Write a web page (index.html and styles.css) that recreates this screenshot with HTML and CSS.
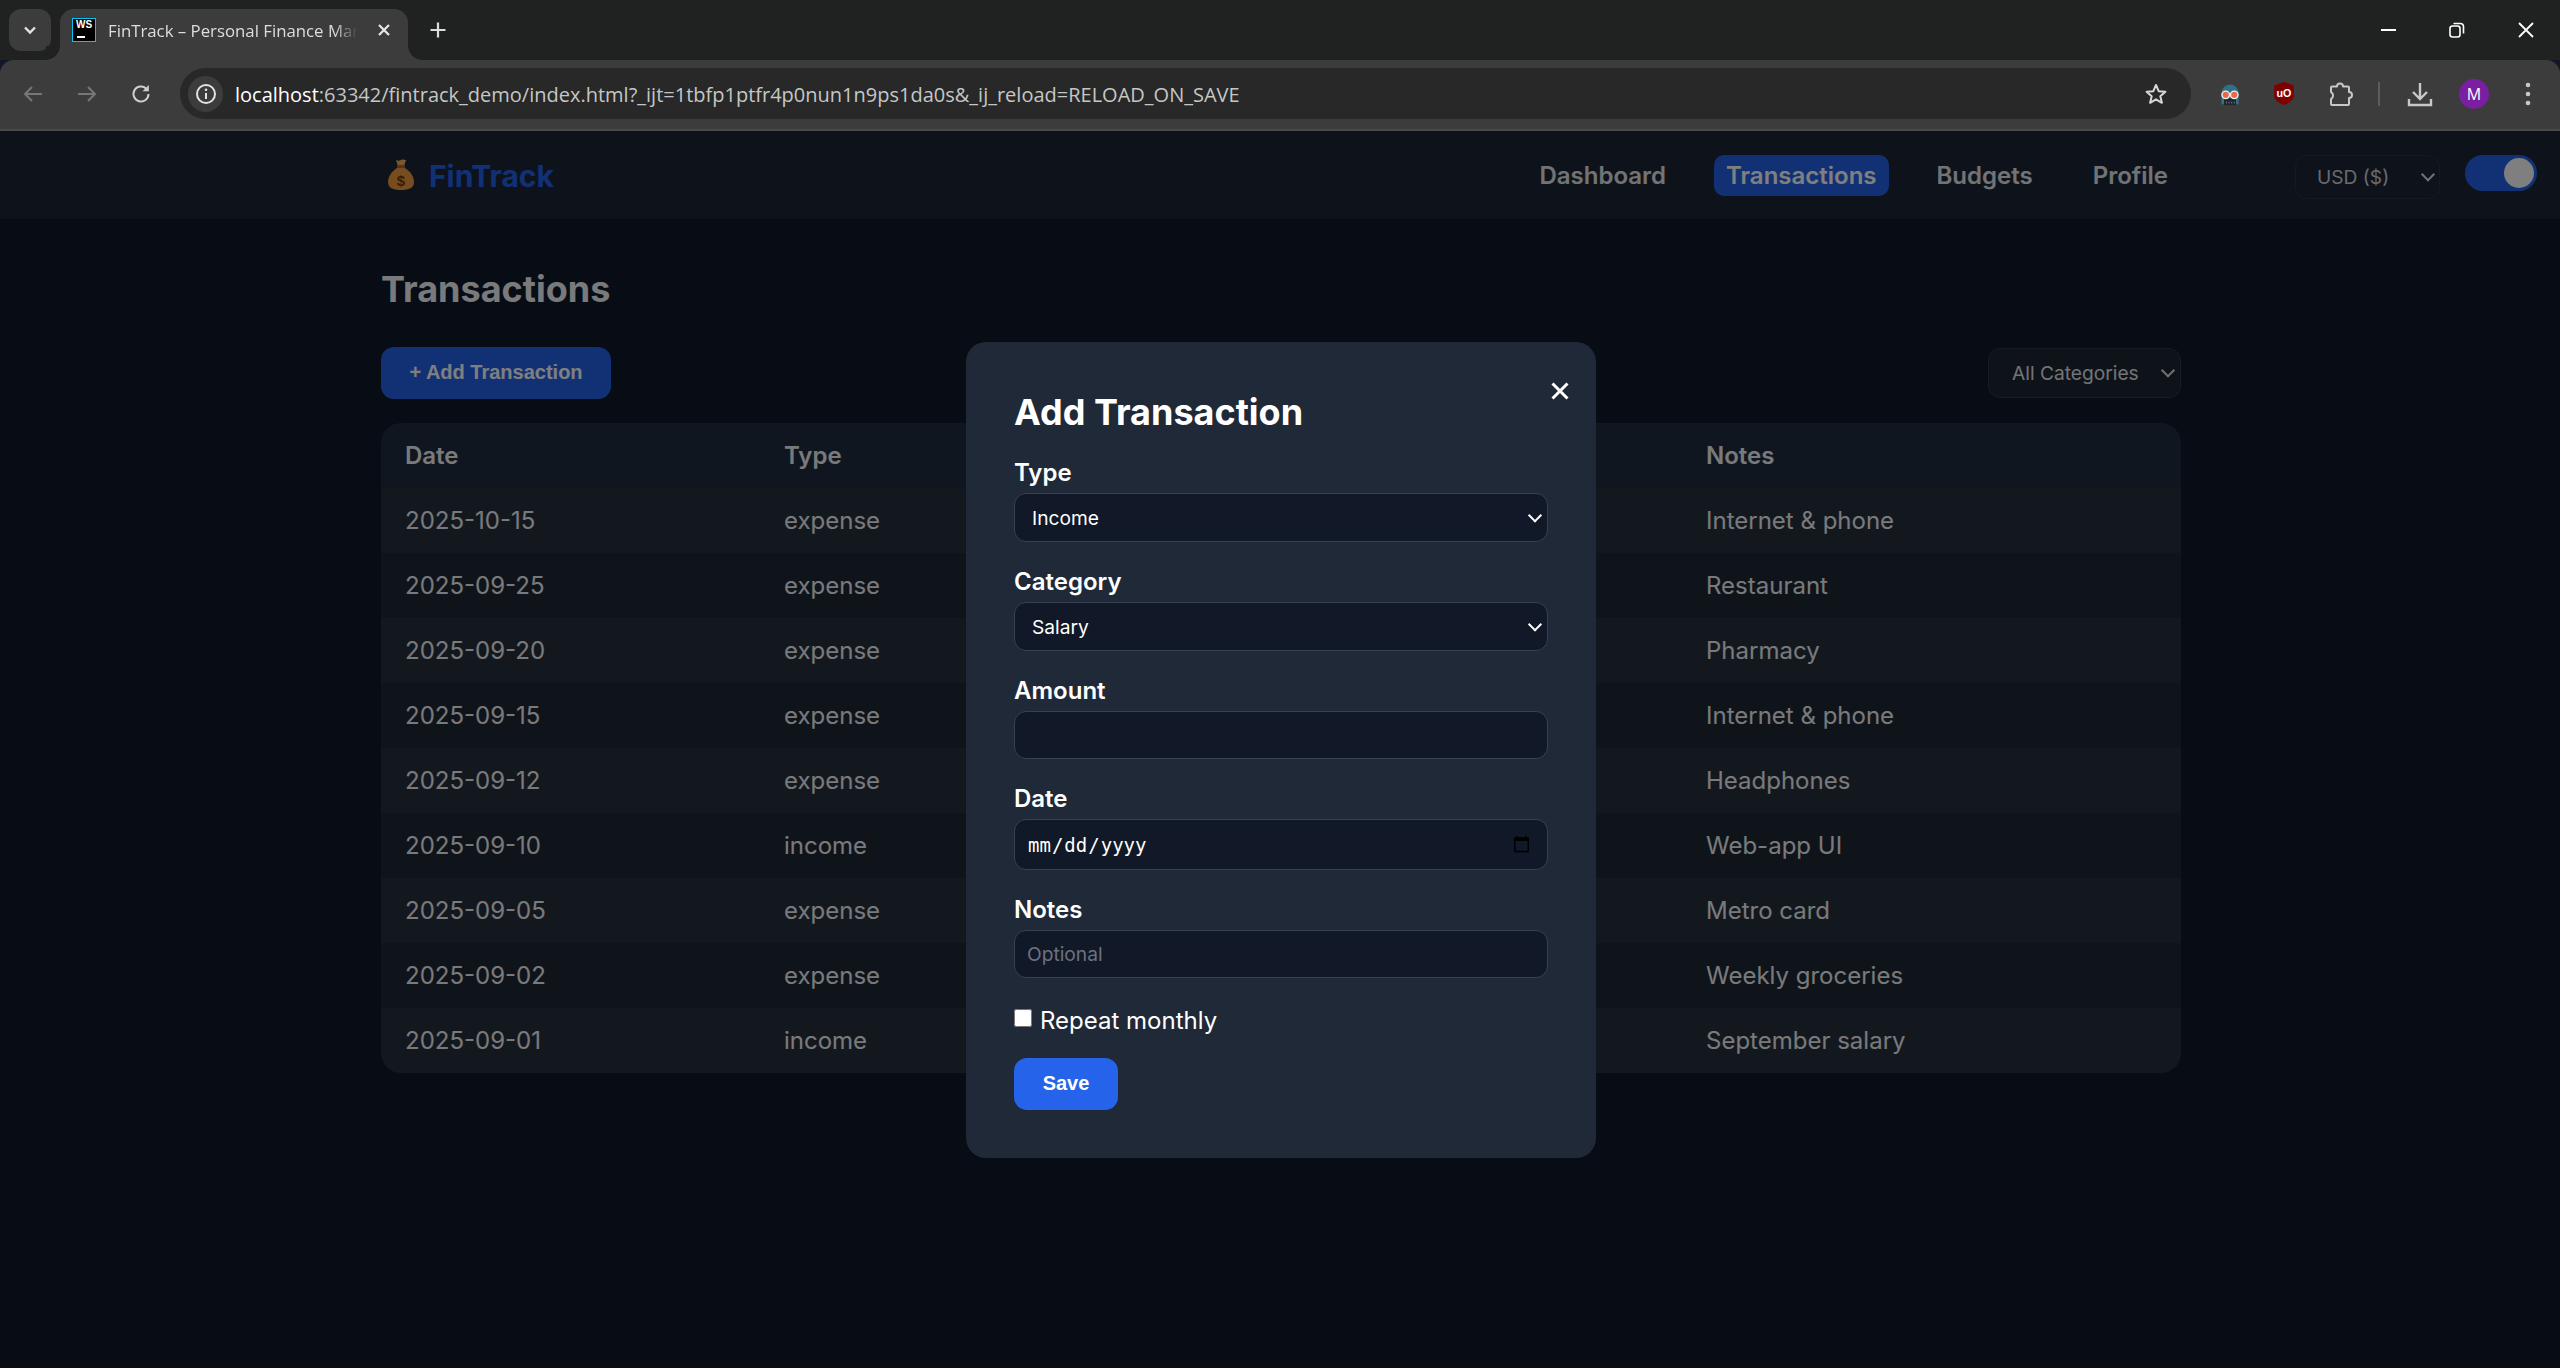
FILE: index.html
```html
<!DOCTYPE html>
<html lang="en">
<head>
    <meta charset="UTF-8">
    <title>FinTrack – Personal Finance Manager</title>
    <link rel="stylesheet" href="styles.css">
</head>
<body>

<div class="tabstrip">
    <div class="tab-list-btn">
        <svg width="18" height="18" viewBox="0 0 18 18"><path d="M4 6.5 9 11.5 14 6.5" fill="none" stroke="#e3e3e3" stroke-width="2.4"/></svg>
    </div>
    <div class="tab">
        <div class="favicon"><span class="favicon-text">WS</span><span class="favicon-bar"></span></div>
        <span class="tab-title">FinTrack – Personal Finance Mar</span>
        <svg class="tab-close" width="16" height="16" viewBox="0 0 16 16"><path d="M3 3 13 13M13 3 3 13" stroke="#e8e8e8" stroke-width="2.2"/></svg>
    </div>
    <svg class="new-tab" width="20" height="20" viewBox="0 0 20 20"><path d="M10 2.5v15M2.5 10h15" stroke="#dcdcdc" stroke-width="2.2"/></svg>
    <div class="window-controls">
        <svg width="18" height="18" viewBox="0 0 18 18"><path d="M2 9h15" stroke="#fff" stroke-width="2"/></svg>
        <svg width="18" height="18" viewBox="0 0 18 18"><rect x="2" y="5" width="10" height="11" rx="2.5" fill="none" stroke="#fff" stroke-width="1.6"/><path d="M5.5 2.5h7a3 3 0 0 1 3 3v7" fill="none" stroke="#fff" stroke-width="1.6"/></svg>
        <svg width="18" height="18" viewBox="0 0 18 18"><path d="M2 2 16 16M16 2 2 16" stroke="#fff" stroke-width="1.8"/></svg>
    </div>
</div>

<div class="toolbar">
    <svg class="nav-icon" width="24" height="24" viewBox="0 0 24 24"><path d="M21 12H4M11 5l-7 7 7 7" fill="none" stroke="#777" stroke-width="2"/></svg>
    <svg class="nav-icon" width="24" height="24" viewBox="0 0 24 24"><path d="M3 12h17M13 5l7 7-7 7" fill="none" stroke="#777" stroke-width="2"/></svg>
    <svg class="nav-icon" width="24" height="24" viewBox="0 0 24 24"><path d="M19.5 12a7.5 7.5 0 1 1-2.3-5.4" fill="none" stroke="#d0d0d0" stroke-width="2"/><path d="M19.8 3v6.2h-6.2z" fill="#d0d0d0"/></svg>
    <div class="omnibox">
        <div class="site-info">
            <svg width="24" height="24" viewBox="0 0 24 24"><circle cx="12" cy="12" r="9" fill="none" stroke="#e3e3e3" stroke-width="2"/><path d="M12 11v6" stroke="#e3e3e3" stroke-width="2"/><circle cx="12" cy="7.8" r="1.3" fill="#e3e3e3"/></svg>
        </div>
        <span class="url"><span class="url-host">localhost</span>:63342/fintrack_demo/index.html?_ijt=1tbfp1ptfr4p0nun1n9ps1da0s&amp;_ij_reload=RELOAD_ON_SAVE</span>
        <svg class="star" width="24" height="24" viewBox="0 0 24 24"><path d="M12 3l2.7 6.2 6.7.6-5.1 4.4 1.6 6.6L12 17.3l-5.9 3.5 1.6-6.6-5.1-4.4 6.7-.6z" fill="none" stroke="#d8d8d8" stroke-width="2" stroke-linejoin="round"/></svg>
    </div>
    <div class="extensions">
        <span class="ext-btn">
            <svg width="22" height="24" viewBox="0 0 24 28">
                <path d="M2 13a10 10 0 0 1 20 0v13H2z" fill="#2f7186"/>
                <rect x="5" y="19" width="14" height="8" fill="#20262b"/>
                <path d="M8 23v2M11 23v2M14 23v2M17 23v2" stroke="#6d8b96" stroke-width="1"/>
                <circle cx="7" cy="15" r="4.4" fill="#e7694a" stroke="#eee" stroke-width="1.6"/>
                <circle cx="17" cy="15" r="4.4" fill="#e7694a" stroke="#eee" stroke-width="1.6"/>
            </svg>
        </span>
        <span class="ext-btn">
            <svg width="22" height="25" viewBox="0 0 24 28">
                <path d="M12 1l11 4v11c0 5-5 9-11 11C6 25 1 21 1 16V5z" fill="#800000"/>
                <text class="ublock-text" x="12" y="18" text-anchor="middle">uO</text>
            </svg>
        </span>
        <span class="ext-btn ext-puzzle">
            <svg width="26" height="26" viewBox="0 0 26 26"><path d="M5 5.5h5a3 3 0 0 1 6 0h5a1 1 0 0 1 1 1V11a3 3 0 0 1 0 6v6a1 1 0 0 1-1 1H5a1 1 0 0 1-1-1v-5a4 4 0 0 0 0-7V6.5a1 1 0 0 1 1-1z" fill="none" stroke="#c8c8c8" stroke-width="2" stroke-linejoin="round"/></svg>
        </span>
        <span class="toolbar-sep"></span>
        <span class="ext-btn">
            <svg width="26" height="26" viewBox="0 0 26 26"><path d="M13 2v15M6 11l7 7 7-7" fill="none" stroke="#c8c8c8" stroke-width="2.4"/><path d="M2 18v6h22v-6" fill="none" stroke="#c8c8c8" stroke-width="2.4"/></svg>
        </span>
        <span class="ext-btn"><span class="avatar">M</span></span>
        <span class="ext-btn">
            <svg width="8" height="26" viewBox="0 0 8 26"><circle cx="4" cy="4" r="2.3" fill="#c8c8c8"/><circle cx="4" cy="13" r="2.3" fill="#c8c8c8"/><circle cx="4" cy="22" r="2.3" fill="#c8c8c8"/></svg>
        </span>
    </div>
</div>

<div class="app">
    <header class="site-header">
        <div class="logo">
            <svg width="28" height="32" viewBox="0 0 28 32">
                <path d="M9 1c2 1 3 1 5 0s3 0 5 0l-2 6h-6z" fill="#f0b060"/>
                <rect x="10" y="6" width="8" height="3" fill="#b06a22"/>
                <path d="M10 9C4 13 1 18 1 23c0 6 5 8 13 8s13-2 13-8c0-5-3-10-9-14z" fill="#ec9a3c"/>
                <text class="bag-text" x="14" y="27" text-anchor="middle">$</text>
            </svg>
            <span class="logo-text">FinTrack</span>
        </div>
        <nav class="nav">
            <a class="nav-link">Dashboard</a>
            <a class="nav-link active">Transactions</a>
            <a class="nav-link">Budgets</a>
            <a class="nav-link">Profile</a>
        </nav>
        <div class="select-wrap currency-wrap">
            <select class="currency">
                <option>USD ($)</option>
            </select>
        </div>
        <div class="toggle"><span class="knob"></span></div>
    </header>

    <main class="content">
        <h1 class="page-title">Transactions</h1>
        <div class="actions">
            <button class="btn btn-add">+ Add Transaction</button>
            <div class="select-wrap">
                <select class="filter">
                    <option>All Categories</option>
                </select>
            </div>
        </div>

        <table class="tx-table">
            <colgroup>
                <col class="col-date">
                <col class="col-type">
                <col class="col-cat">
                <col class="col-amount">
                <col class="col-notes">
            </colgroup>
            <thead>
                <tr><th>Date</th><th>Type</th><th></th><th></th><th>Notes</th></tr>
            </thead>
            <tbody>
                <tr><td>2025-10-15</td><td>expense</td><td></td><td></td><td>Internet &amp; phone</td></tr>
                <tr><td>2025-09-25</td><td>expense</td><td></td><td></td><td>Restaurant</td></tr>
                <tr><td>2025-09-20</td><td>expense</td><td></td><td></td><td>Pharmacy</td></tr>
                <tr><td>2025-09-15</td><td>expense</td><td></td><td></td><td>Internet &amp; phone</td></tr>
                <tr><td>2025-09-12</td><td>expense</td><td></td><td></td><td>Headphones</td></tr>
                <tr><td>2025-09-10</td><td>income</td><td></td><td></td><td>Web-app UI</td></tr>
                <tr><td>2025-09-05</td><td>expense</td><td></td><td></td><td>Metro card</td></tr>
                <tr><td>2025-09-02</td><td>expense</td><td></td><td></td><td>Weekly groceries</td></tr>
                <tr><td>2025-09-01</td><td>income</td><td></td><td></td><td>September salary</td></tr>
            </tbody>
        </table>
    </main>

    <div class="overlay">
        <form class="modal">
            <span class="modal-close">
                <svg width="18" height="18" viewBox="0 0 18 18"><path d="M1.5 1.5 16.5 16.5M16.5 1.5 1.5 16.5" stroke="#fff" stroke-width="3"/></svg>
            </span>
            <h2 class="modal-title">Add Transaction</h2>

            <label class="field-label">Type</label>
            <div class="select-wrap form-select">
                <select class="field">
                    <option>Income</option>
                </select>
            </div>

            <label class="field-label">Category</label>
            <div class="select-wrap form-select">
                <select class="field">
                    <option>Salary</option>
                </select>
            </div>

            <label class="field-label">Amount</label>
            <input class="field" type="number">

            <label class="field-label">Date</label>
            <input class="field field-date" type="date">

            <label class="field-label">Notes</label>
            <input class="field" type="text" placeholder="Optional">

            <label class="repeat">
                <input class="repeat-check" type="checkbox">
                Repeat monthly
            </label>

            <button class="btn btn-save" type="button">Save</button>
        </form>
    </div>
</div>

</body>
</html>
```

FILE: styles.css
```css
* {
    box-sizing: border-box;
}

body {
    margin: 0;
    height: 100vh;
    overflow: hidden;
    display: flex;
    flex-direction: column;
    background-color: #101828;
    font-family: Inter, sans-serif;
    color: #fff;
}

/* browser chrome */
.tabstrip {
    height: 60px;
    flex: none;
    display: flex;
    align-items: flex-end;
    background-color: #202221;
    padding-left: 9px;
}

.tab-list-btn {
    width: 42px;
    height: 42px;
    margin-bottom: 9px;
    border-radius: 12px;
    background-color: #3c3c3c;
    display: flex;
    align-items: center;
    justify-content: center;
}

.tab {
    position: relative;
    width: 348px;
    height: 51px;
    margin-left: 9px;
    padding: 0 15px 9px 12px;
    border-radius: 14px 14px 0 0;
    background-color: #3c3c3c;
    display: flex;
    align-items: center;
}

.tab::before,
.tab::after {
    content: "";
    position: absolute;
    bottom: 0;
    width: 14px;
    height: 14px;
    background: radial-gradient(circle at 0 0, #202221 13.5px, #3c3c3c 14px);
}

.tab::before {
    left: -14px;
}

.tab::after {
    right: -14px;
    background: radial-gradient(circle at 100% 0, #202221 13.5px, #3c3c3c 14px);
}

.favicon {
    width: 24px;
    height: 24px;
    flex: none;
    background-color: #000;
    border: 1px solid #07c3f2;
    position: relative;
    overflow: hidden;
}

.favicon-text {
    display: block;
    font: bold 10px/12px "Liberation Sans", sans-serif;
    text-align: center;
    color: #fff;
}

.favicon-bar {
    position: absolute;
    left: 4px;
    bottom: 3px;
    width: 8px;
    height: 2px;
    background-color: #fff;
}

.tab-title {
    width: 250px;
    flex: none;
    margin-left: 12px;
    padding-top: 1px;
    font: 16.8px "Open Sans", sans-serif;
    color: #dedede;
    white-space: nowrap;
    -webkit-mask-image: linear-gradient(90deg, #000 225px, transparent 250px);
    mask-image: linear-gradient(90deg, #000 225px, transparent 250px);
}

.tab-close {
    margin-left: 18px;
    flex: none;
}

.new-tab {
    margin: 0 0 20px 20px;
}

.window-controls {
    margin-left: auto;
    height: 60px;
    display: flex;
    align-items: center;
    gap: 51px;
    padding-right: 25px;
}

.toolbar {
    height: 71px;
    flex: none;
    display: flex;
    align-items: center;
    padding: 0 0 2px 21px;
    background-color: #3c3c3c;
    border-bottom: 2px solid #4a4a4a;
    border-radius: 14px 14px 0 0;
}

.nav-icon {
    margin-right: 30px;
    flex: none;
}

.nav-icon:nth-child(3) {
    margin-right: 27px;
}

.omnibox {
    width: 2011px;
    height: 51px;
    flex: none;
    display: flex;
    align-items: center;
    padding: 0 23px 0 8px;
    border-radius: 26px;
    background-color: #282828;
}

.site-info {
    width: 35px;
    height: 36px;
    border-radius: 18px;
    background-color: #3c3c3c;
    display: flex;
    align-items: center;
    justify-content: center;
}

.url {
    margin-left: 12px;
    padding-top: 1px;
    font: 20px "Open Sans", sans-serif;
    color: #c4c7c5;
    white-space: nowrap;
}

.url-host {
    color: #fff;
}

.star {
    margin-left: auto;
}

.extensions {
    flex: 1;
    display: flex;
    align-items: center;
    padding-left: 12px;
}

.ext-btn {
    width: 54px;
    flex: none;
    display: flex;
    align-items: center;
    justify-content: center;
}

.ext-puzzle {
    padding-left: 4px;
}

.ublock-text {
    font: bold 12px "Liberation Sans", sans-serif;
    fill: #fff;
}

.toolbar-sep {
    width: 2px;
    height: 24px;
    margin: 0 13px;
    background-color: #5c5c5c;
}

.avatar {
    width: 30px;
    height: 30px;
    border-radius: 50%;
    background-color: #7b1fa2;
    font: 16px/30px "Open Sans", sans-serif;
    text-align: center;
}

/* the page */
.app {
    position: relative;
    flex: 1;
}

.site-header {
    height: 88px;
    display: flex;
    align-items: center;
    padding: 0 23px 0 387px;
    background-color: #1c2636;
}

.logo {
    display: flex;
    align-items: center;
    gap: 14px;
    margin-right: auto;
}

.logo-text {
    font-size: 30px;
    font-weight: 700;
    color: #2563eb;
    padding-top: 2px;
}

.bag-text {
    font: bold 15px "Liberation Sans", sans-serif;
    fill: #6b3a0c;
}

.nav {
    display: flex;
    gap: 36px;
    margin-right: 115px;
}

.nav-link {
    padding: 5px 12px;
    border-radius: 10px;
    font-size: 24px;
    line-height: 31px;
    font-weight: 600;
    color: #e5e7eb;
}

.nav-link.active {
    background-color: #2563eb;
    color: #fff;
}

/* native arrow is too small, so draw the chevron on a wrapper */
.select-wrap {
    position: relative;
}

.select-wrap::after {
    content: "";
    position: absolute;
    top: 50%;
    right: 13px;
    width: 8px;
    height: 8px;
    border-right: 2px solid #e5e7eb;
    border-bottom: 2px solid #e5e7eb;
    transform: translate(50%, -75%) rotate(45deg);
    pointer-events: none;
}

.select-wrap select {
    display: block;
    appearance: none;
    -webkit-appearance: none;
}

.currency-wrap {
    margin: 4px 25px 0 0;
}

.currency-wrap::after {
    right: 12px;
}

.currency {
    width: 145px;
    height: 44px;
    padding-left: 21px;
    border: 1px solid #2b3544;
    border-radius: 12px;
    background-color: #1c2636;
    color: #d1d5db;
    font: 19.2px Inter, sans-serif;
}

.toggle {
    width: 72px;
    height: 36px;
    padding: 3px;
    border-radius: 18px;
    background-color: #2563eb;
    display: flex;
    justify-content: flex-end;
    margin-bottom: 4px;
}

.knob {
    width: 30px;
    height: 30px;
    border-radius: 50%;
    background-color: #fff;
}

.content {
    width: 1800px;
    margin-left: 381px;
    padding-top: 48px;
}

.page-title {
    margin: 0 0 36px;
    font-size: 36px;
    line-height: 44px;
    font-weight: 700;
    color: #f3f4f6;
}

.actions {
    display: flex;
    justify-content: space-between;
    align-items: center;
    margin-bottom: 24px;
}

.btn {
    height: 52px;
    padding: 0 0 1px;
    border: none;
    border-radius: 13px;
    background-color: #2563eb;
    color: #fff;
    font: bold 20px "Liberation Sans", sans-serif;
}

.btn-add {
    width: 230px;
}

.filter {
    width: 193px;
    height: 50px;
    padding-left: 23px;
    border: 1px solid #2f3947;
    border-radius: 12px;
    background-color: #1c2432;
    color: #e5e7eb;
    font: 19.2px Inter, sans-serif;
}

.tx-table {
    width: 1800px;
    table-layout: fixed;
    border-collapse: separate;
    border-spacing: 0;
    border-radius: 20px;
    overflow: hidden;
    font-size: 24px;
    color: #f3f4f6;
}

.col-date {
    width: 379px;
}

.col-type {
    width: 382px;
}

.col-cat, .col-amount {
    width: 270px;
}

.tx-table th,
.tx-table td {
    height: 65px;
    padding: 0 24px;
    text-align: left;
}

.tx-table th {
    font-weight: 600;
    background-color: #202c3e;
}

.tx-table td {
    background-color: #1e2836;
    font-weight: 400;
}

.tx-table tbody tr:nth-child(odd) td {
    background-color: #26303e;
}

.overlay {
    position: absolute;
    top: 0;
    left: 0;
    right: 0;
    bottom: 0;
    background: rgba(0, 0, 0, 0.5);
    display: flex;
    align-items: center;
    justify-content: center;
}

.modal {
    position: relative;
    width: 630px;
    margin: 1px 0 0 2px;
    padding: 48px 48px 48px;
    border-radius: 20px;
    background-color: #1f2937;
    display: flex;
    flex-direction: column;
    align-items: flex-start;
}

.modal-close {
    position: absolute;
    top: 40px;
    right: 27px;
    display: flex;
}

.modal-title {
    margin: 0 0 24px;
    font-size: 36px;
    line-height: 44px;
    font-weight: 700;
}

.field-label {
    font-size: 24px;
    line-height: 29px;
    font-weight: 600;
    margin-bottom: 6px;
}

.field {
    width: 534px;
    height: 48px;
    margin-bottom: 25px;
    padding: 0 12px;
    border: 1px solid #374151;
    border-radius: 12px;
    background-color: #111827;
    color: #fff;
    font: 19.2px Inter, sans-serif;
}

.form-select {
    margin-bottom: 25px;
}

.form-select::after {
    border-color: #fff;
}

.form-select .field {
    height: 49px;
    margin-bottom: 0;
    padding-left: 17px;
}

.field::placeholder {
    color: #6b7280;
}

.field-date {
    height: 51px;
    padding: 0 14px 0 12px;
    font-family: "DejaVu Sans Mono", monospace;
    font-size: 19px;
}

.repeat {
    display: flex;
    align-items: center;
    gap: 8px;
    margin: 3px 0 23px;
    font-size: 24px;
    line-height: 29px;
}

.repeat-check {
    width: 18px;
    height: 18px;
    margin: 0;
    position: relative;
    top: -3px;
}

.btn-save {
    width: 104px;
}
```
